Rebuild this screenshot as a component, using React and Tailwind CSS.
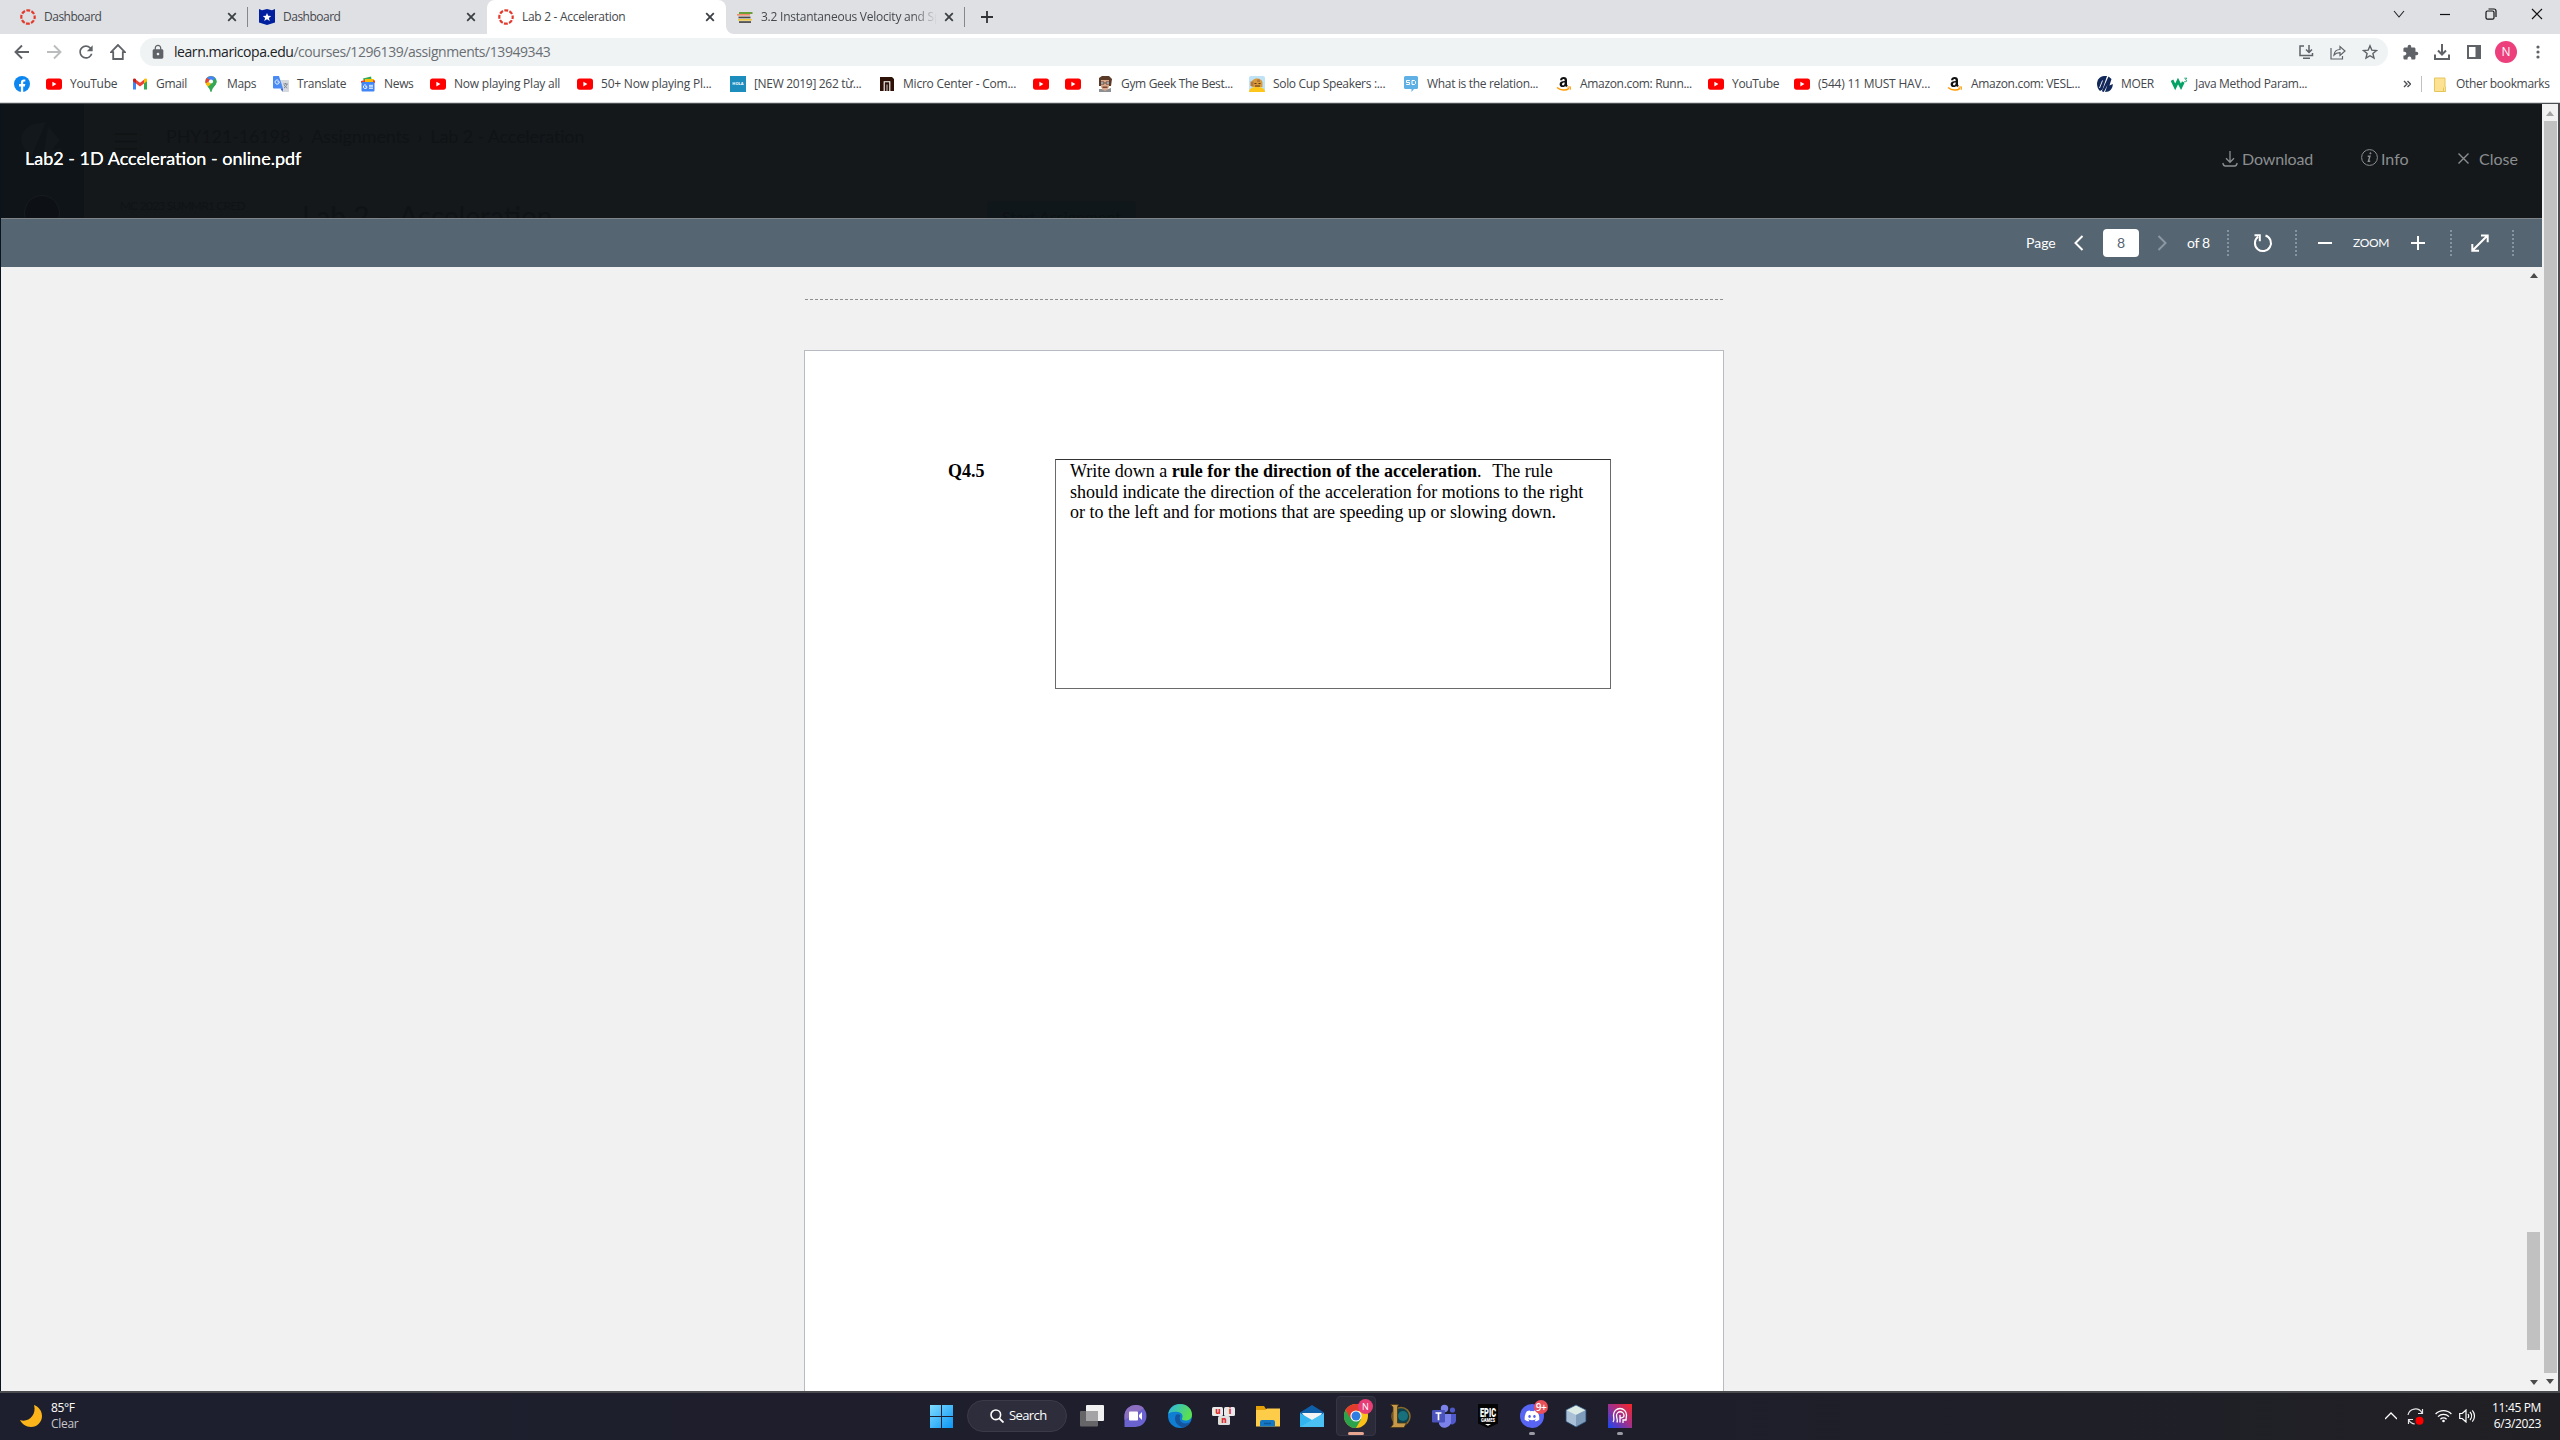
import React from "react";
import { FaDiscord } from "react-icons/fa";
import { MdExtension, MdLock, MdRefresh } from "react-icons/md";

/* ---------- favicons ---------- */
const CanvasRing = () => (
  <svg className="size-4 shrink-0" viewBox="0 0 16 16">
    <circle cx="8" cy="8" r="6.7" fill="none" stroke="#e23b2e" strokeWidth="2.2" strokeDasharray="3.9 1.36" strokeDashoffset="1.9" />
  </svg>
);
const StarBadge = () => (
  <svg className="size-4 shrink-0" viewBox="0 0 16 16">
    <path d="M0 0l3 1.200L8 0l5 1.200L16 0v13.500L8 16 0 13.500z" fill="#00209f" />
    <path d="M8 4l1.200 2.800 3 .2-2.300 1.900.8 3L8 10.300l-2.700 1.600.8-3L3.800 7l3-.2z" fill="#fff" />
  </svg>
);
const Books = () => (
  <svg className="size-4 shrink-0" viewBox="0 0 16 16">
    <path d="M2 3h13.500v2H2z" fill="#6a9f3a" />
    <path d="M0 5h13v1.600H0z" fill="#f08c6a" />
    <path d="M1.500 7.600h12v1.700h-12z" fill="#4a4a4a" />
    <path d="M1 10h14v1.600H1z" fill="#f0c83c" />
    <path d="M2 12.300h12v1.500H2z" fill="#333" />
  </svg>
);
const YT = () => (
  <svg className="size-4 shrink-0" viewBox="0 0 16 16">
    <rect y="2.500" width="16" height="11.200" rx="2.600" fill="#f00" />
    <path d="M6.400 5.700v4.700l4-2.350z" fill="#fff" />
  </svg>
);
const Facebook = () => (
  <svg className="size-4 shrink-0" viewBox="0 0 16 16">
    <circle cx="8" cy="8" r="8" fill="#0c86f0" />
    <path d="M6.900 16v-5.600H5V8.100h1.900V6.500c0-2 1.100-3.100 2.900-3.100.8 0 1.500.1 1.500.1v2h-.9c-.9 0-1.200.6-1.200 1.200v1.400h2.100l-.4 2.300H9.200V16z" fill="#fff" />
  </svg>
);
const Gmail = () => (
  <svg className="size-4 shrink-0" viewBox="0 0 16 16">
    <path d="M1 4v9.500h3V7z" fill="#4285f4" />
    <path d="M15 4v9.500h-3V7z" fill="#34a853" />
    <path d="M4 3.800l4 3 4-3v3.800l-4 3-4-3z" fill="#ea4335" />
    <path d="M1 4c0-1.500 1.800-1.900 3-.9v4.500L1 5.300z" fill="#c5221f" />
    <path d="M15 4c0-1.500-1.800-1.900-3-.9v4.500l3-2.300z" fill="#fbbc04" />
  </svg>
);
const MapsPin = () => (
  <svg className="size-4 shrink-0" viewBox="0 0 16 16">
    <defs><clipPath id="pin"><path d="M8 0a5.500 5.500 0 0 1 5.500 5.500c0 3.500-3 4.700-4.500 8.700-.3 1-.5 1.800-1 1.800s-.7-.8-1-1.800C5.500 10.200 2.500 9 2.500 5.500A5.500 5.500 0 0 1 8 0z" /></clipPath></defs>
    <g clipPath="url(#pin)">
      <path d="M0 0h16v16H0z" fill="#34a853" />
      <path d="M0 12L13 0H0z" fill="#fbbc04" />
      <path d="M0 0h16L9 5 5 8.500 2 7z" fill="#4285f4" />
      <path d="M5 8.500L2 12V5z" fill="#fbbc04" />
      <path d="M1 2h3l3 2-4.500 4z" fill="#ea4335" />
      <path d="M13 2l3 5-8 6-4.500-2L8 8z" fill="#34a853" />
      <path d="M3 7.500L5.500 5.500 8 8l-4 3.500z" fill="#fbbc04" />
    </g>
    <circle cx="8" cy="5.500" r="2.100" fill="#fff" />
  </svg>
);
const Translate = () => (
  <svg className="size-4 shrink-0" viewBox="0 0 16 16">
    <path d="M7 4h8.200c.5 0 .8.3.8.8v10.400c0 .5-.3.800-.8.800H10z" fill="#d5d8dc" />
    <path d="M.8 0H6l4 12.500H.8c-.5 0-.8-.3-.8-.8V.8C0 .3.300 0 .800 0z" fill="#4a8af4" />
    <path d="M7.500 12.500H10L9.500 16z" fill="#2a56c6" />
    <path d="M6.300 5.800H4.400M6.300 5.800A2.100 2.100 0 1 1 5.500 4.400" fill="none" stroke="#fff" strokeWidth=".9" />
    <path d="M10.300 8h4.500M12.500 7v1M14 8c-.5 2-1.500 3-3 4M11.300 9c.6 1.500 1.500 2.300 3 3" fill="none" stroke="#6d7a88" strokeWidth=".8" />
  </svg>
);
const News = () => (
  <svg className="size-4 shrink-0" viewBox="0 0 16 16">
    <path d="M3 2.500L11 .5l1 5H4z" fill="#34a853" />
    <path d="M5 3h9l-1 4H5z" fill="#fbbc04" />
    <path d="M1 5l4-1v3H1zM15 4.500l-2-.5v3h2z" fill="#ea4335" />
    <rect x="1.500" y="6" width="13" height="9.500" rx="1" fill="#4285f4" />
    <path d="M7 10.700H5.200M7 10.700a1.800 1.800 0 1 1-.6-1.300M9 9.300h4M9 10.800h4M9 12.300h4" fill="none" stroke="#fff" strokeWidth=".9" />
  </svg>
);
const Hola = () => (
  <span className="flex size-4 shrink-0 items-center justify-center bg-[#1c8dbd] text-[4px] font-bold tracking-normal text-white">HOLA</span>
);
const MicroCenter = () => (
  <svg className="size-4 shrink-0" viewBox="0 0 16 16">
    <path d="M1 1h12l2 2v12H1z" fill="#2e1208" />
    <path d="M5.200 15V5.700h5.600V15" fill="none" stroke="#fff" strokeWidth="1.100" />
    <path d="M8 15V8.500" stroke="#fff" strokeWidth=".8" />
  </svg>
);
const GymGeek = () => (
  <svg className="size-4 shrink-0" viewBox="0 0 16 16">
    <path d="M2 2l3-2h7l3 3-1 7H2z" fill="#5c3a28" />
    <path d="M4 4h8v7l-2.500 4h-3L4 11z" fill="#d9a88a" />
    <path d="M3.500 6h3.500v2H3.500zM9 6h3.500v2H9z" fill="#eee" stroke="#3a2a22" strokeWidth=".8" />
    <path d="M5.500 10.500h5v1.500h-5z" fill="#7a4632" />
    <path d="M2 13l3 0 3 2 3-2 3-1v4H2z" fill="#8d8f92" />
  </svg>
);
const SoloCup = () => (
  <svg className="size-4 shrink-0" viewBox="0 0 16 16">
    <rect width="16" height="16" rx="2" fill="#bfe2f6" />
    <path d="M0 16c0-4 4-5 8-5s8 1 8 5z" fill="#ffc61a" />
    <path d="M2.500 11V7c0-6 11-6 11 0v4z" fill="#d99a3c" />
    <path d="M1.500 5.500h3V10h-3zM8 3.500h3v2.500H8z" fill="#b5793a" />
    <path d="M5.500 7.500h2M9.500 7.500h2M6 10h5" stroke="#5b3513" strokeWidth="1" />
  </svg>
);
const SocialSD = () => (
  <svg className="size-4 shrink-0" viewBox="0 0 16 16">
    <path d="M2.500 0h11A1.500 1.500 0 0 1 15 1.500v10a1.500 1.500 0 0 1-1.500 1.500H11l-2.500 3V13h-6A1.500 1.500 0 0 1 1 11.500v-10A1.500 1.500 0 0 1 2.500 0z" fill="#5fb0e5" />
    <path d="M6.800 4.500H3.500v2h3v2H3.200M9 4.500v4h2.500l1-1v-2l-1-1z" fill="none" stroke="#fff" strokeWidth="1" />
  </svg>
);
const Amazon = () => (
  <svg className="size-4 shrink-0" viewBox="0 0 16 16">
    <path d="M4 4.200C4.200 2 5.700.9 7.700.9c2.100 0 3.300 1 3.300 3v4.300c0 .7.300 1.100.8 1.600l-1.600 1.300c-.5-.4-.8-.8-1-1.200-1.800 2.200-5.600 1.300-5.600-1.700C3.600 6 5.700 5 8.700 5c.1-1.400-.2-2.100-1.100-2.100-.8 0-1.200.5-1.400 1.400zm4.700 2.300C7 6.500 6 7 6 8.300c0 1.700 2.700 1.500 2.700-1.200z" fill="#111" fillRule="evenodd" />
    <path d="M1 11.500c4 3.200 9 3.200 12 .8" fill="none" stroke="#ff9900" strokeWidth="1.500" />
    <path d="M11.300 11h3v2.800" fill="none" stroke="#ff9900" strokeWidth="1.100" />
  </svg>
);
const Moer = () => (
  <svg className="size-4 shrink-0" viewBox="0 0 16 16">
    <path d="M7 0h3L5.500 13.500 3 15C1 13 0 10.500 0 8c0-4.500 3-7.500 7-8z" fill="#12285a" />
    <path d="M11.500.6L14.500 3l-2 6.500L15.800 8C15.800 12.500 13 16 8 16l2.500-7L6.800 16l-2-.8z" fill="#12285a" />
    <path d="M5.500 4.500L2.500 12" stroke="#fff" strokeWidth=".9" />
  </svg>
);
const W3 = () => (
  <svg className="size-4 shrink-0" viewBox="0 0 16 16">
    <path d="M1 4.200l3.200 6.600L7 5l3 5.800L12.300 6" fill="none" stroke="#04a265" strokeWidth="2.900" />
    <path d="M13.300 2.200H16l-1.500 1.600c2 .2 1.500 2.700-1.200 1.700" fill="none" stroke="#04a265" strokeWidth=".9" />
  </svg>
);

/* ---------- tab strip ---------- */
const TabX = () => (
  <svg className="size-2.5 shrink-0" viewBox="0 0 10 10">
    <path d="M1.200 1.200l7.600 7.600M8.800 1.200L1.200 8.800" stroke="#3c4043" strokeWidth="1.800" />
  </svg>
);

function TabStrip() {
  return (
    <div className="flex h-[34px] shrink-0 items-center bg-[#dfe0e4] text-[12px] tracking-[-0.5px] text-[#45484c]">
      <div className="flex h-full w-[247px] items-center pl-5 pr-[10px]">
        <CanvasRing />
        <span className="ml-2 flex-1">Dashboard</span>
        <TabX />
      </div>
      <div className="h-5 w-px bg-[#85878b]" />
      <div className="flex h-full w-[239px] items-center rounded-br-lg pl-[11px] pr-[11px]">
        <StarBadge />
        <span className="ml-2 flex-1">Dashboard</span>
        <TabX />
      </div>
      <div className="flex h-full w-[239px] items-center rounded-t-lg bg-white pl-[11px] pr-[11px]">
        <CanvasRing />
        <span className="ml-2 flex-1 tracking-[-0.3px]">Lab 2 - Acceleration</span>
        <TabX />
      </div>
      <div className="h-full w-[238px] bg-white">
        <div className="flex h-full w-full items-center rounded-bl-lg bg-[#dfe0e4] pl-[11px] pr-[10px]">
          <Books />
          <span className="ml-2 w-[176px] overflow-hidden whitespace-nowrap tracking-[-0.24px] [mask-image:linear-gradient(to_right,black_86%,transparent_100%)]">
            3.2 Instantaneous Velocity and Sp
          </span>
          <span className="ml-auto flex"><TabX /></span>
        </div>
      </div>
      <div className="h-5 w-px bg-[#85878b]" />
      <svg className="ml-4 size-3" viewBox="0 0 12 12"><path d="M6 0v12M0 6h12" stroke="#303236" strokeWidth="1.800" /></svg>
      <div className="mb-[6px] ml-auto flex items-center">
        <span className="flex w-[46px] justify-center"><svg className="size-3" viewBox="0 0 12 12"><path d="M1 3l5 6 5-6" fill="none" stroke="#222" strokeWidth="1.100" /></svg></span>
        <span className="flex w-[46px] justify-center"><svg className="size-3" viewBox="0 0 12 12"><path d="M1 6.500h10" stroke="#111" strokeWidth="1.200" /></svg></span>
        <span className="flex w-[46px] justify-center"><svg className="size-3" viewBox="0 0 12 12"><rect x="1" y="3" width="8" height="8.200" rx="1.500" fill="none" stroke="#111" strokeWidth="1.200" /><path d="M3.500 1h5.500a2 2 0 0 1 2 2v6" fill="none" stroke="#111" strokeWidth="1.200" /></svg></span>
        <span className="flex w-[46px] justify-center"><svg className="size-3" viewBox="0 0 12 12"><path d="M1 1l10 10M11 1L1 11" stroke="#111" strokeWidth="1.200" /></svg></span>
      </div>
    </div>
  );
}

/* ---------- address bar ---------- */
const Cell = ({ children }) => <span className="flex w-8 shrink-0 items-center justify-center">{children}</span>;
const Line = ({ d, color = "#5f6368", w = 1.6, children }) => (
  <svg className="size-4" viewBox="0 0 16 16" fill="none" stroke={color} strokeWidth={w}><path d={d} />{children}</svg>
);

function AddressBar() {
  return (
    <div className="flex h-8 shrink-0 items-center bg-white pl-[6px] pr-[6px] pt-1">
      <Cell><Line d="M15 8H2M8 1.500L1.500 8 8 14.500" w={1.9} /></Cell>
      <Cell><Line d="M1 8h13M8 1.500L14.500 8 8 14.500" color="#babcbe" w={1.9} /></Cell>
      <Cell><MdRefresh className="size-5 text-[#5f6368]" /></Cell>
      <Cell><Line d="M8 1L1 8.200h2.200V15h9.600V8.200H15z" w={1.8} /></Cell>
      <div className="ml-[6px] flex h-7 flex-1 items-center rounded-full bg-[#eff3f4] pl-[10px] pr-[2px]">
        <MdLock className="size-4 text-[#5f6368]" />
        <span className="mb-px ml-2 text-[14px] tracking-[-0.44px] text-[#6a6e73]"><span className="text-[#202124]">learn.maricopa.edu</span>/courses/1296139/assignments/13949343</span>
        <span className="ml-auto flex">
          <Cell><Line d="M6 2H2v9.500h12.500V9M5 14.300h7M11 1v7M8 5.500l3 3 3-3" w={1.5} /></Cell>
          <Cell><Line d="M1 4v11h11.500v-3M4 11c.5-4 3-5.500 6-5.500V2.500L15 7l-5 4.500V8.700C7.500 8.700 5.500 9.300 4 11z" w={1.2} /></Cell>
          <Cell><Line d="M8 1.800l1.800 4.300 4.700.4-3.600 3 1.100 4.600L8 11.700 4 14.100l1.100-4.600-3.600-3 4.700-.4z" w={1.4} /></Cell>
        </span>
      </div>
      <span className="ml-[6px] flex items-center">
        <Cell><MdExtension className="size-[17px] text-[#5f6368]" /></Cell>
        <Cell><Line d="M8 0v10M4 6.500l4 4 4-4M1 10.500V15h14v-4.500" w={2} /></Cell>
        <Cell><svg className="size-4" viewBox="0 0 16 16"><path d="M1 1h14v14H1zM3 3v10h6.500V3z" fill="#5f6368" fillRule="evenodd" /></svg></Cell>
        <Cell><span className="flex size-[22px] items-center justify-center rounded-full bg-[#ec3f7c] text-[12px] text-white">N</span></Cell>
        <Cell><svg className="size-4" viewBox="0 0 16 16" fill="#5f6368"><circle cx="8" cy="3" r="1.600" /><circle cx="8" cy="8" r="1.600" /><circle cx="8" cy="13" r="1.600" /></svg></Cell>
      </span>
    </div>
  );
}

/* ---------- bookmarks ---------- */
const marks = [
  [Facebook, "", "w-[32px]"],
  [YT, "YouTube", "w-[86px]"],
  [Gmail, "Gmail", "w-[71px]"],
  [MapsPin, "Maps", "w-[70px]"],
  [Translate, "Translate", "w-[87px]"],
  [News, "News", "w-[70px]"],
  [YT, "Now playing Play all", "w-[147px]"],
  [YT, "50+ Now playing Pl...", "w-[153px]"],
  [Hola, "[NEW 2019] 262 từ...", "w-[149px]"],
  [MicroCenter, "Micro Center - Com...", "w-[154px]"],
  [YT, "", "w-[32px]"],
  [YT, "", "w-[32px]"],
  [GymGeek, "Gym Geek The Best...", "w-[152px]"],
  [SoloCup, "Solo Cup Speakers :...", "w-[154px]"],
  [SocialSD, "What is the relation...", "w-[153px]"],
  [Amazon, "Amazon.com: Runn...", "w-[152px]"],
  [YT, "YouTube", "w-[86px]"],
  [YT, "(544) 11 MUST HAV...", "w-[153px]"],
  [Amazon, "Amazon.com: VESL...", "w-[150px]"],
  [Moer, "MOER", "w-[74px]"],
  [W3, "Java Method Param...", "w-[150px]"],
];
const wide = ["Now playing Play all", "50+ Now playing Pl...", "Micro Center - Com...", "(544) 11 MUST HAV..."];

function Bookmarks() {
  return (
    <div className="flex h-9 shrink-0 items-center bg-white pl-[14px] pr-[10px] text-[12px] tracking-[-0.32px] text-[#44474b]">
      {marks.map(([Icon, label, width], i) => (
        <div key={i} className={"flex shrink-0 items-center gap-2 whitespace-nowrap " + width}>
          <Icon />
          {label && <span className={wide.includes(label) ? "tracking-[-0.22px]" : ""}>{label}</span>}
        </div>
      ))}
      <svg className="ml-auto size-2" viewBox="0 0 8 8"><path d="M1 1l3 3-3 3M4.500 1l3 3-3 3" fill="none" stroke="#4a4d51" strokeWidth="1.400" /></svg>
      <div className="ml-[10px] h-4 w-px bg-[#bfc1c4]" />
      <svg className="ml-3 h-[15px] w-3" viewBox="0 0 12 15"><path d="M.5 1h10.500v9h.7v4.500H.5z" fill="#fde293" stroke="#e5c65c" /><path d="M9.500 10.500V14" stroke="#e5c65c" /></svg>
      <span className="ml-[10px] w-[94px] whitespace-nowrap">Other bookmarks</span>
    </div>
  );
}

/* ---------- viewer ---------- */
function Backdrop() {
  return (
    <div aria-hidden="true" className="absolute inset-0 overflow-hidden font-['Lato',sans-serif] text-[#101315]">
      <div className="absolute left-0 top-0 h-full w-[83px] bg-[#0f1418]">
        <svg className="absolute left-[19px] top-[18px] h-[44px] w-[46px]" viewBox="0 0 46 44"><path d="M26 0L12 34C-6 22 0 2 20 1zM28 4l12 14-8 10 10-2-6 12-14 4z" fill="#13181c" /></svg>
        <span className="absolute left-[23px] top-[91px] size-[36px] rounded-full border border-[#171c20] bg-[#0d1116]" />
      </div>
      <svg className="absolute left-[113px] top-[28px] size-6" viewBox="0 0 24 24"><path d="M1 2h22M1 9.500h22M1 17h22" stroke="#101315" strokeWidth="1.500" /></svg>
      <span className="absolute left-[165px] top-[20px] whitespace-nowrap text-[18px] leading-6 tracking-[-0.15px]">PHY121-16198<span className="mx-[8px]">›</span>Assignments<span className="mx-[8px]">›</span>Lab 2 - Acceleration</span>
      <span className="absolute left-[119px] top-[94px] whitespace-nowrap text-[12px] leading-4 tracking-[-0.8px]">MC 2023 SUMMR1 CRED</span>
      <span className="absolute left-[301px] top-[94px] whitespace-nowrap text-[28px] leading-9">Lab 2 – Acceleration</span>
      <span className="absolute left-[986px] top-[97px] h-10 w-[149px] rounded bg-[#10171a] text-center text-[16px] leading-8 text-[#0d1214]">Start Assignment</span>
    </div>
  );
}

const Dots = ({ className }) => <div className={"h-[26px] border-l-2 border-dotted border-[#8494a0] " + className} />;

function DocToolbar() {
  return (
    <div className="flex h-[49px] shrink-0 items-center justify-end border-t border-[#7f8589] bg-[#556572] pb-px pr-[28px] font-['Lato',sans-serif] text-[14px] text-white">
      <span className="w-[29px]">Page</span>
      <svg className="ml-3 size-6" viewBox="0 0 24 24"><path d="M15.500 5L8.500 12l7 7" fill="none" stroke="#fff" strokeWidth="2" /></svg>
      <span className="ml-3 flex h-7 w-9 items-center justify-center rounded-sm bg-white text-[#556572]">8</span>
      <svg className="ml-[11px] size-6" viewBox="0 0 24 24"><path d="M8.500 5l7 7-7 7" fill="none" stroke="#8b98a3" strokeWidth="2" /></svg>
      <span className="ml-[13px] w-[25px] whitespace-nowrap tracking-[-0.3px]">of 8</span>
      <Dots className="ml-[15px]" />
      <svg className="ml-[22px] size-6" viewBox="0 0 24 24" fill="none" stroke="#fff" strokeWidth="2"><path d="M14.500 4.500A8 8 0 1 1 7 5.800M3.500 4.300h5.300v6" /></svg>
      <Dots className="ml-[20px]" />
      <svg className="ml-4 size-6" viewBox="0 0 24 24"><path d="M5 12h14" stroke="#fff" strokeWidth="2" /></svg>
      <span className="ml-4 w-[38px] text-[12px] tracking-[-0.3px]">ZOOM</span>
      <svg className="ml-[15px] size-6" viewBox="0 0 24 24"><path d="M5 12h14M12 5v14" stroke="#fff" strokeWidth="2" /></svg>
      <Dots className="ml-[20px]" />
      <svg className="ml-4 size-6" viewBox="0 0 24 24" fill="none" stroke="#fff" strokeWidth="2"><path d="M4.500 19.500l15-15M13 4.500h6.700v6.700M4.300 13v6.700H11" /></svg>
      <Dots className="ml-[20px]" />
    </div>
  );
}

const Arrow = ({ up, color }) => (
  <svg className="h-[5px] w-2 shrink-0" viewBox="0 0 8 5"><path d={up ? "M4 0l4 5H0z" : "M0 0h8L4 5z"} fill={color} /></svg>
);

function Viewer() {
  return (
    <div className="flex h-[1287px] shrink-0 border-l border-[#0a1420] bg-[#f1f1f1]">
      <div className="flex w-[2541px] flex-col">
        <header className="relative flex h-[114px] shrink-0 items-center bg-[#14181b] pb-[5px] pl-6 pr-6 font-['Lato',sans-serif] text-[16px] text-[#8b8e90]">
          <Backdrop />
          <h1 className="relative text-[18px] text-white [text-shadow:0_0_0.5px_white]">Lab2 - 1D Acceleration - online.pdf</h1>
          <div className="relative ml-auto flex items-center">
            <svg className="size-4" viewBox="0 0 16 16" fill="none" stroke="#8b8e90" strokeWidth="1.300"><path d="M8 0v11M4 7.300l4 4 4-4M.8 12c.4 2 1 3 2.500 3h9.400c1.500 0 2.100-1 2.500-3" /></svg>
            <span className="ml-1 w-[71px] tracking-[-0.15px]">Download</span>
            <svg className="mb-[3px] ml-12 size-[17px]" viewBox="0 0 17 17" fill="none" stroke="#8b8e90"><circle cx="8.500" cy="8.500" r="7.900" /><path d="M6.700 7.300h2.200l-1.500 5h1.800" strokeWidth="1.400" /><circle cx="9.400" cy="4.300" r=".6" fill="#8b8e90" /></svg>
            <span className="ml-[3px] w-[27px]">Info</span>
            <svg className="ml-[50px] size-[11px]" viewBox="0 0 11 11"><path d="M.5.5l10 10M10.500.5l-10 10" stroke="#8b8e90" strokeWidth="1.400" /></svg>
            <span className="ml-[10px] w-[39px]">Close</span>
          </div>
        </header>
        <DocToolbar />
        <div className="flex min-h-0 flex-1">
          <main className="flex flex-1 flex-col items-center pl-[2px] pt-8">
            <svg className="h-px w-[918px] shrink-0" viewBox="0 0 918 1"><path d="M0 .5h918" stroke="#8f9092" strokeDasharray="3 2" /></svg>
            <article className="mt-[50px] flex min-h-0 w-[920px] flex-1 items-start border border-b-0 border-[#b7bcc2] bg-white pl-[143px] pt-[108px] font-['Liberation_Serif','Times_New_Roman',serif] text-[18px] leading-[20.700px] text-black">
              <b className="w-[107px] pt-[2px]">Q4.5</b>
              <p className="h-[230px] w-[556px] whitespace-nowrap border border-[#6a6a6a] border-t-[#333] px-[14px] pt-px">
                Write down a <b>rule for the direction of the acceleration</b>.<span className="ml-[2px]">&nbsp; The rule</span>
                <br />
                should indicate the direction of the acceleration for motions to the right
                <br />
                or to the left and for motions that are speeding up or slowing down.
              </p>
            </article>
          </main>
          <div className="flex w-[17px] flex-col items-center py-[6px]">
            <Arrow up color="#4a4a4a" />
            <div className="mt-[954px] h-[118px] w-[13px] bg-[#c1c1c1]" />
            <span className="mt-auto flex"><Arrow color="#4a4a4a" /></span>
          </div>
        </div>
      </div>
      <div className="flex w-4 flex-col items-center bg-[#f1f1f1] pb-[7px] pt-[7px]">
        <Arrow up color="#a3a3a3" />
        <div className="mt-[5px] h-[1252px] w-[13px] bg-[#c1c1c1]" />
        <span className="mt-auto flex"><Arrow color="#4a4a4a" /></span>
      </div>
      <div className="flex-1 bg-[#4a4a4c]" />
    </div>
  );
}

/* ---------- taskbar ---------- */
const App24 = ({ children }) => <svg className="size-6 shrink-0" viewBox="0 0 24 24">{children}</svg>;

function TaskIcons() {
  return (
    <>
      <App24>
        <defs><linearGradient id="win" x1="0" y1="0" x2="1" y2="1"><stop offset="0" stopColor="#7fdcff" /><stop offset="1" stopColor="#0b95f5" /></linearGradient></defs>
        <path d="M0 1h11v11H0zM12 1h11v11H12zM0 13h11v11H0zM12 13h11v11H12z" fill="url(#win)" />
      </App24>
      <div className="ml-[13px] flex h-8 w-[100px] items-center rounded-full border border-[#3a3a49] bg-[#2d2d3c] pl-[22px] text-[13px] tracking-[-0.6px] text-white">
        <svg className="mr-[5px] size-[14px]" viewBox="0 0 14 14"><circle cx="5.800" cy="5.800" r="4.800" fill="none" stroke="#fff" strokeWidth="1.600" /><path d="M9.300 9.300L13.500 13.500" stroke="#fff" strokeWidth="1.800" /></svg>
        Search
      </div>
      <span className="ml-[13px] flex items-center gap-5">
        <App24>
          <rect x="6" y="1" width="18" height="16" rx="1" fill="#f1f1f1" />
          <rect x="0" y="7" width="18" height="15.500" rx="1" fill="#666668" />
          <path d="M6 7h12v10H6z" fill="#a4a4a6" />
        </App24>
        <App24>
          <path d="M12 1a11 11 0 1 1-1 22H.5V12A11 11 0 0 1 12 1z" fill="#6a62cf" />
          <path d="M12 1a11 11 0 0 1 8 3.300L.5 16v-4A11 11 0 0 1 12 1z" fill="#8c6fc0" />
          <rect x="5" y="7.500" width="9" height="9" rx="1" fill="#fff" /><path d="M15 11l3-3v8l-3-3z" fill="#fff" />
        </App24>
        <App24>
          <defs><linearGradient id="eg" x1="0" y1="0" x2="1" y2=".4"><stop offset="0" stopColor="#2bb5e8" /><stop offset="1" stopColor="#5be04f" /></linearGradient></defs>
          <circle cx="12" cy="12" r="12" fill="#0f7ed3" />
          <path d="M.3 10C1 4 6 0 12 0c7 0 12 5 12 10.500 0 4-3 6-6.500 6-2.500 0-4-1-3.500-2 1.500-2.500 0-6-4-6.500C6 7.500 2 8 .3 10z" fill="url(#eg)" />
          <path d="M8 11c-3 5 1 12 8 12.300 3-.8 5-3 6.300-5.300-4 2.500-9.300 1.500-10.300-2-.5-2-.3-3 .5-4.500C11 10 9 10 8 11z" fill="#14559e" />
        </App24>
        <App24>
          <rect x="0" y="3" width="11" height="9" rx="1.500" fill="#e9e9e9" /><rect x="12" y="3" width="11" height="9" rx="1.500" fill="#e9e9e9" /><rect x="6" y="12" width="12" height="9" rx="1.500" fill="#dedede" />
          <g fill="#dc2c2c" fontFamily="Open Sans, sans-serif" fontWeight="800" fontSize="8" textAnchor="middle"><text x="6" y="9.500">u</text><text x="18" y="10">i</text><text x="12" y="18.500">n</text></g>
        </App24>
        <App24>
          <path d="M0 2h8l2 3v3H0z" fill="#e3a008" /><path d="M0 6h9l2-1.500h13V22.500H0z" fill="#fdcd4a" />
          <path d="M4 22.500v-4.500a2 2 0 0 1 2-2h11a2 2 0 0 1 2 2v4.500z" fill="#1478c4" /><path d="M8 19.500h7" stroke="#0c5a9b" strokeWidth="1.500" />
        </App24>
        <App24>
          <path d="M0 8.500l12-7.500L24 8.500v3H0z" fill="#0e5ea8" /><path d="M2 9h20l-4 7H7z" fill="#f4f4f4" /><path d="M0 9l12 7L24 9v14H0z" fill="#32b4f0" /><path d="M0 23L24 9v14z" fill="#5cc9f5" opacity=".6" />
        </App24>
      </span>
      <div className="ml-3 flex h-10 w-10 shrink-0 flex-col items-center rounded border border-[#353545] bg-[#2a2a38] pt-[7px]">
        <div className="relative flex">
          <App24>
            <circle cx="12" cy="12" r="12" fill="#fbc116" />
            <path d="M1.600 6A12 12 0 0 0 12 24l5.200-9H8z" fill="#2ba24c" />
            <path d="M1.600 6L6.800 15l5.200-8h10.900L22.400 6A12 12 0 0 0 1.600 6z" fill="#e33b2e" />
            <circle cx="12" cy="12" r="5.600" fill="#fff" /><circle cx="12" cy="12" r="4.500" fill="#2f7de1" />
          </App24>
          <span className="absolute -right-[5px] -top-[5px] flex size-[15px] items-center justify-center rounded-full bg-[#e83e78] text-[9px] text-white">N</span>
        </div>
        <span className="mt-1 h-[3px] w-4 rounded-full bg-[#e7a690]" />
      </div>
      <span className="ml-3 flex items-center gap-5">
        <App24>
          <circle cx="13" cy="12.500" r="9" fill="#0d3f4d" stroke="#8c6a2c" strokeWidth="1.500" /><circle cx="15" cy="12" r="5" fill="#17707c" />
          <path d="M2.500.5h8L9.500 3v16h9l-2.500 4.500H2.500L5 20.500V3z" fill="#c79a4b" stroke="#4a3612" strokeWidth=".8" />
        </App24>
        <App24>
          <circle cx="12.500" cy="4.500" r="3.700" fill="#7b83eb" /><circle cx="20.500" cy="6" r="2.600" fill="#5059c9" />
          <path d="M17 10h7v7a4 4 0 0 1-7 2z" fill="#5059c9" /><path d="M7 10h12v7a6.300 6.300 0 0 1-12 3z" fill="#7b83eb" />
          <rect x="0" y="6" width="13" height="12.500" rx="1.300" fill="#4b53bc" /><path d="M3.500 9h6M6.500 9v7.200" stroke="#fff" strokeWidth="1.700" />
        </App24>
        <App24>
          <path d="M3 0h18a1 1 0 0 1 1 1v18.500L12 24 2 19.500V1a1 1 0 0 1 1-1z" fill="#050505" />
          <g fill="#fff" textAnchor="middle" fontFamily="Roboto, sans-serif" fontWeight="900"><text x="12" y="12.500" fontSize="12" textLength="16" lengthAdjust="spacingAndGlyphs">EPIC</text><text x="12" y="18" fontSize="4.500" textLength="14" lengthAdjust="spacingAndGlyphs">GAMES</text></g>
          <path d="M9 20h6l-3 1.800z" fill="#fff" />
        </App24>
        <div className="relative flex size-6 items-center justify-center rounded-full bg-[#5865f2] text-white">
          <FaDiscord className="size-4" />
          <span className="absolute -right-1 -top-1 flex size-[14px] items-center justify-center rounded-full bg-[#e9505a] text-[10px] font-semibold tracking-[-0.5px]">9+</span>
          <span className="absolute -bottom-[7px] h-[3px] w-[6px] rounded-full bg-[#9a9aa2]" />
        </div>
        <App24>
          <path d="M12 1l10 5v11.500L12 23 2 17.500V6z" fill="#a9c0d6" /><path d="M12 1l10 5-10 5L2 6z" fill="#dcebe6" /><path d="M12 11v12l10-5.500V6z" fill="#7f9cba" /><path d="M12 1l10 5v11.500L12 23 2 17.500V6z" fill="none" stroke="#26466f" strokeWidth=".8" />
        </App24>
        <div className="relative flex justify-center">
          <App24>
            <defs><linearGradient id="kr" x1="0" y1="1" x2="1" y2="0"><stop offset="0" stopColor="#1547f5" /><stop offset=".5" stopColor="#a0308c" /><stop offset="1" stopColor="#fb2424" /></linearGradient></defs>
            <path d="M0 0h24v24H0z" fill="url(#kr)" />
            <path d="M5 18c2-2 .5-4 .5-7a6.500 6.500 0 0 1 13 0l-.5 5h-3v3M9 18.500c1-3-.5-4-.5-7a3.700 3.700 0 0 1 7.500 0c0 2.500-2.500 2.500-4.500 2.500M12 18.500V11" fill="none" stroke="#fff" strokeWidth="1.300" />
          </App24>
          <span className="absolute -bottom-[7px] h-[3px] w-[6px] rounded-full bg-[#9a9aa2]" />
        </div>
      </span>
    </>
  );
}

function Taskbar() {
  return (
    <footer className="grid h-[49px] shrink-0 grid-cols-[930px_1fr_auto] items-center border-t-2 border-[#4b4c50] bg-[linear-gradient(to_right,#1e1f2e,#1e1e2c_60%,#202024)] text-white">
      <div className="flex items-center gap-[9px] pl-5 pb-px text-[12px] leading-4">
        <svg className="size-[22px]" viewBox="0 0 22 22"><path d="M14 0c5 2 8 6 8 11a11 11 0 0 1-11 11c-5 0-9-3-11-7 8 3 17-5 14-15z" fill="#fbb41a" /></svg>
        <div><p className="tracking-[-0.4px]">85°F</p><p className="tracking-[-0.3px] text-[#c6c6cc]">Clear</p></div>
      </div>
      <div className="flex items-center pb-px">
        <TaskIcons />
      </div>
      <div className="flex items-center pb-px pr-[19px]">
        <svg className="size-3" viewBox="0 0 12 12"><path d="M0 9l6-6 6 6" fill="none" stroke="#fff" strokeWidth="1.300" /></svg>
        <svg className="ml-[10px] size-[17px]" viewBox="0 0 17 17" fill="none" stroke="#e6e6e6" strokeWidth="1.200"><path d="M1 7a7.500 7.500 0 0 1 14-2M15.500 1v4.500H11M1.500 16v-4.500H6M1.800 12a7.500 7.500 0 0 0 6 4" /><circle cx="12.500" cy="12.800" r="4" fill="#f00" stroke="none" /></svg>
        <svg className="ml-[11px] h-[14px] w-[17px]" viewBox="0 0 17 14" fill="none" stroke="#fff" strokeWidth="1.300"><path d="M.6 5a11 11 0 0 1 15.800 0M3 7.600a7.800 7.800 0 0 1 11 0M5.400 10.200a4.500 4.500 0 0 1 6.200 0" /><circle cx="8.500" cy="12" r="1.300" fill="#fff" stroke="none" /></svg>
        <svg className="ml-[7px] h-[14px] w-[17px]" viewBox="0 0 17 14" fill="none" stroke="#fff" strokeWidth="1.200"><path d="M.7 4.500h2.500L7 1v12L3.200 9.500H.7zM9 5a3.500 3.500 0 0 1 0 4M11 3a6 6 0 0 1 0 8M13.300 1.300a8.500 8.500 0 0 1 0 11.400" /></svg>
        <div className="ml-[14px] w-[51px] whitespace-nowrap text-right text-[12px] leading-4 tracking-[-0.35px]"><p>11:45 PM</p><p>6/3/2023</p></div>
      </div>
    </footer>
  );
}

export default function App() {
  return (
    <div className="flex h-[1440px] w-[2560px] flex-col overflow-hidden bg-[#f1f1f1] font-['Open_Sans','Noto_Sans',sans-serif]">
      <TabStrip />
      <AddressBar />
      <Bookmarks />
      <div className="h-px shrink-0 bg-[#d4d5d7]" />
      <div className="h-px shrink-0 bg-[#4c4f51]" />
      <Viewer />
      <Taskbar />
    </div>
  );
}
